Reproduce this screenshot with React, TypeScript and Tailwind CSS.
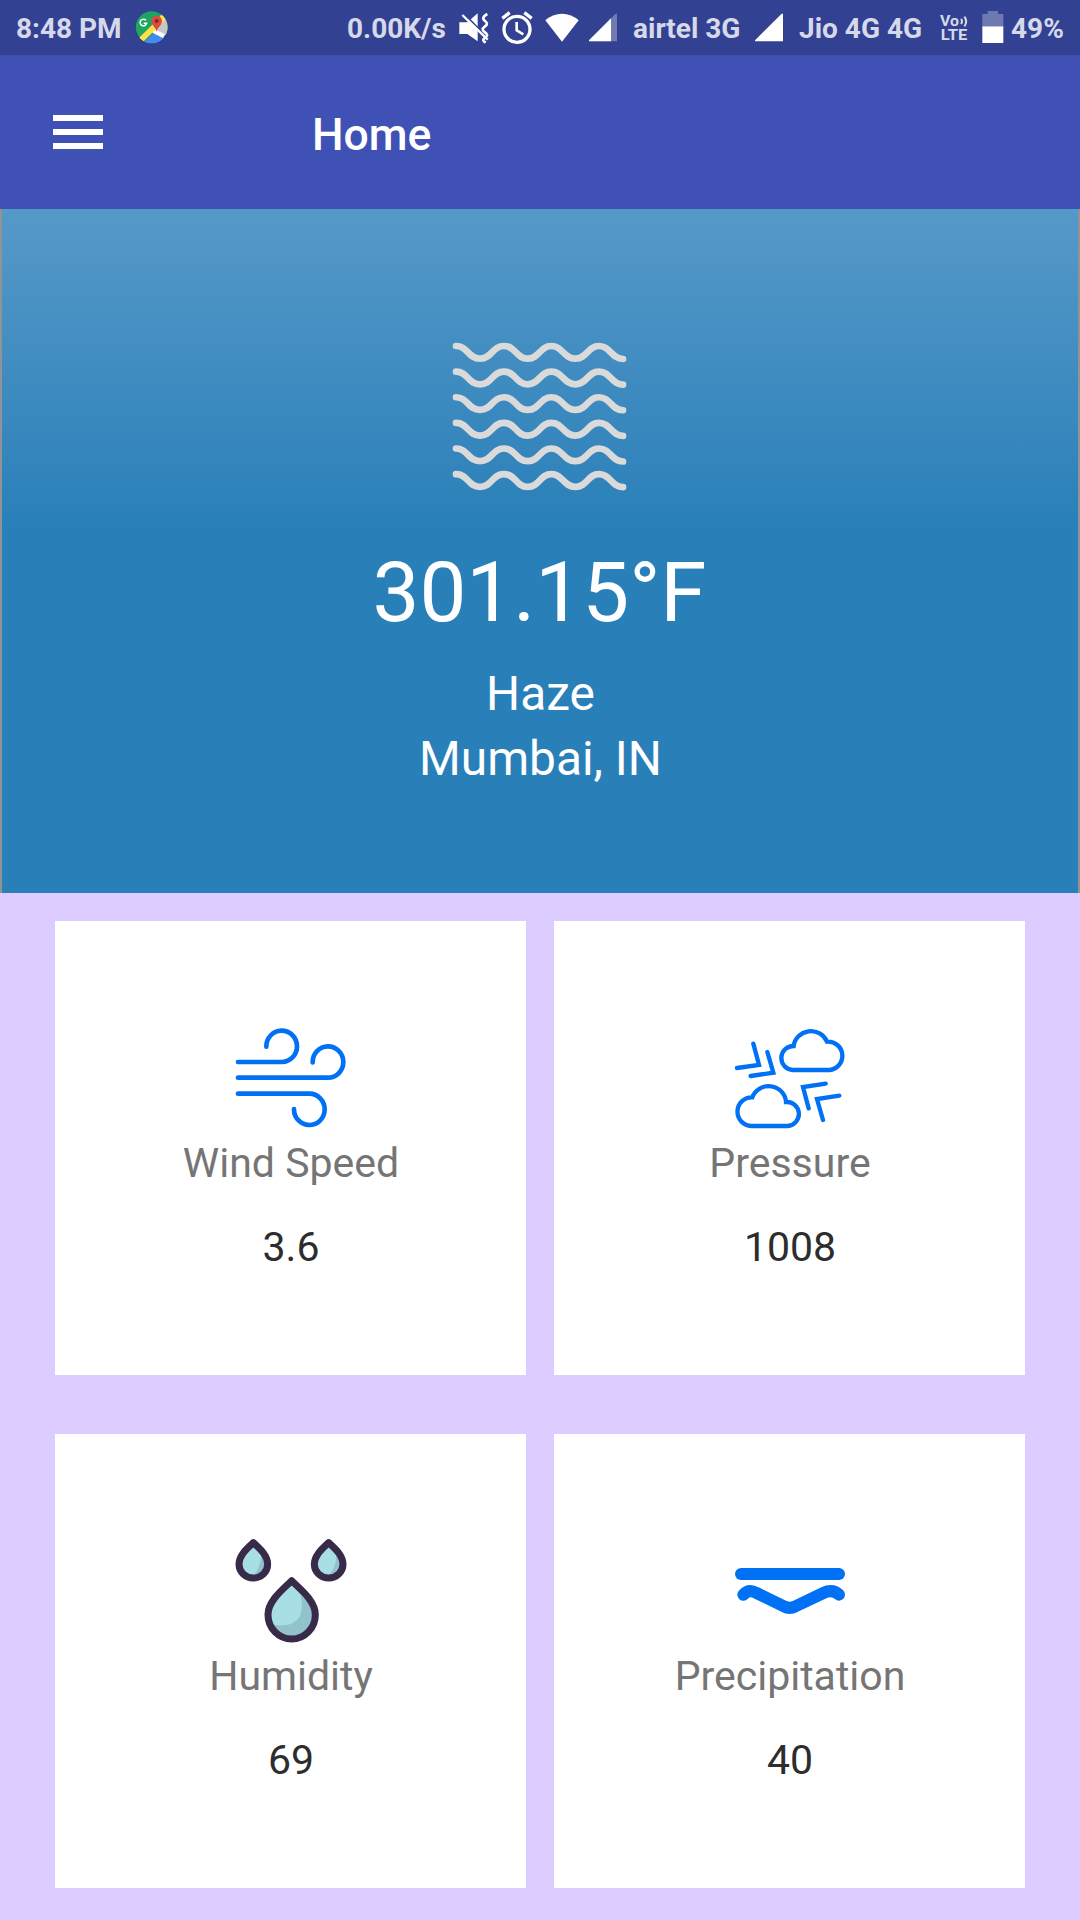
import type { ReactNode } from "react";

function MapsIcon() {
  return (
    <svg className="block h-[55px] w-[34px]" viewBox="0 0 102 165">
      <defs>
        <clipPath id="disc"><circle cx="50" cy="82" r="48" /></clipPath>
      </defs>
      <circle cx="50" cy="84" r="49" fill="#273377" />
      <g clipPath="url(#disc)">
        <rect y="30" width="102" height="105" fill="#1fa463" />
        <path d="M88 30L102 30V110L60 92L54 78Z" fill="#c7c7c7" />
        <path d="M20 132L62 96L102 116V135H20Z" fill="#4688f4" />
        <path d="M56 86L90 103L84 114L52 98Z" fill="#fff" />
        <path d="M8 118L82 44L94 56L20 130Z" fill="#ffe047" />
      </g>
      <path d="M65 97C64 82 49 77 49 63A16 16 0 0 1 81 63C81 77 66 82 65 97Z" fill="#dd4b3e" />
      <circle cx="65" cy="63" r="6" fill="#7b2a22" />
      <path d="M33 61A10 10 0 1 0 35 70H26" fill="none" stroke="#fff" strokeWidth="4.5" />
    </svg>
  );
}

function MuteVibrateIcon() {
  return (
    <svg className="block h-[55px] w-[30px]" viewBox="0 0 90 165">
      <path d="M1 67H25L56 40V124L25 102H1Z" fill="#fff" />
      <path d="M12 38L92 121" stroke="#334192" strokeWidth="6" />
      <path d="M10 45L86 119" stroke="#fff" strokeWidth="7" />
      <path d="M85 42C70 50 70 57 78 63C86 69 86 74 77 80C68 87 70 91 78 97C88 104 86 109 77 114C70 119 72 123 80 128" fill="none" stroke="#fff" strokeWidth="8" />
    </svg>
  );
}

function AlarmIcon() {
  return (
    <svg className="block h-[55px] w-[32px]" viewBox="0 0 96 165">
      <circle cx="48" cy="88" r="39" fill="none" stroke="#fff" strokeWidth="10" />
      <path d="M4 55L26 38M92 55L70 38" stroke="#fff" strokeWidth="10" />
      <path d="M47 66V91L67 103" fill="none" stroke="#fff" strokeWidth="8" />
    </svg>
  );
}

function WifiIcon() {
  return (
    <svg className="block h-[55px] w-[34px]" viewBox="0 0 102 165">
      <path d="M51 125L1 61Q23 41 51 41T101 61Z" fill="#fff" />
    </svg>
  );
}

function SignalIcon({ weak = false }: { weak?: boolean }) {
  return (
    <svg className="block h-[55px] w-[28px]" viewBox="0 0 84 165">
      <path d="M0 124V121L80 41H84V124Z" fill="#fff" opacity={weak ? 0.3 : 1} />
      {weak && <path d="M0 124V121L66 55V124Z" fill="#fff" />}
    </svg>
  );
}

function VolteIcon() {
  return (
    <svg className="block h-[55px] w-[28px]" viewBox="0 0 84 165">
      <g fill="#d6d9e9" fontFamily="Roboto, sans-serif" fontWeight="700">
        <text x="0" y="79" fontSize="42" textLength="57" lengthAdjust="spacingAndGlyphs">Vo</text>
        <text x="2" y="121" fontSize="45" textLength="80" lengthAdjust="spacingAndGlyphs">LTE</text>
      </g>
      <path d="M63 57Q69 64 63 72M73 50Q84 64 73 79" fill="none" stroke="#d6d9e9" strokeWidth="6" />
    </svg>
  );
}

function BatteryIcon() {
  return (
    <svg className="block h-[55px] w-[22px]" viewBox="0 0 66 165">
      <path d="M1 42H17V33H48V42H64V79H1Z" fill="#6f79b1" />
      <path d="M1 79H64V129H1Z" fill="#fff" />
    </svg>
  );
}

function StatusText({ className, children }: { className: string; children: ReactNode }) {
  return <span className={`block whitespace-nowrap text-[28px] leading-[57px] font-bold text-[#d6d9e9] ${className}`}>{children}</span>;
}

function HazeIcon() {
  return (
    <svg className="block h-[190px] w-[220px]" viewBox="0 0 660 570" fill="none" stroke="#dadada" strokeWidth="20" strokeLinecap="round">
      {[0, 1, 2, 3, 4, 5].map((row) => (
        <path
          key={row}
          transform={`translate(0 ${row * 76.9})`}
          d="M78 78C114 78 114 116 150 116S186 78 222 78S257 116 293 116S329 78 364 78S400 116 436 116S472 78 507 78S543 116 579 117"
        />
      ))}
    </svg>
  );
}

function WindIcon() {
  return (
    <svg className="block h-[128px] w-[141px]" viewBox="0 0 423 384" fill="none" stroke="#0070f5" strokeWidth="14" strokeLinecap="round">
      <path d="M54 156H186A46 47 0 1 0 139 110" />
      <path d="M54 203H324A46 47 0 1 0 278 157" />
      <path d="M54 251H268A46 47 0 1 1 222 297" />
    </svg>
  );
}

function PressureIcon() {
  return (
    <svg className="block h-[128px] w-[141px]" viewBox="-3 0 423 384" fill="none" stroke="#0070f5" strokeWidth="13" strokeLinecap="round">
      <path d="M219 180A36 36 0 0 1 221 108A52 50 0 0 1 321 95A42 42 0 0 1 328 180Z" />
      <path d="M94 348A43 43 0 0 1 97 262A52 50 0 0 1 198 276A36 36 0 0 1 203 348Z" />
      <path d="M100 101L117 165L51 174M142 126L160 188L92 198M317 221L249 231L266 295M358 257L291 267L309 330" />
    </svg>
  );
}

function HumidityIcon() {
  return (
    <svg className="block h-[128px] w-[141px] overflow-visible" viewBox="0 9 423 384">
      {[100, 326].map((x) => (
        <g key={x} transform={`translate(${x} 0)`}>
          <path d="M0 68C18 85 43 105 43 133A43 41 0 0 1 -43 133C-43 105 -18 85 0 68Z" fill="#a8dfe6" />
          <path d="M24 103Q37 120 35 137Q29 164 4 162Q21 145 24 103Z" fill="#92c2cc" />
          <path d="M0 68C18 85 43 105 43 133A43 41 0 0 1 -43 133C-43 105 -18 85 0 68Z" fill="none" stroke="#382b49" strokeWidth="21" strokeLinejoin="round" />
        </g>
      ))}
      <path d="M215 182C240 207 286 242 286 284A71 73 0 0 1 144 284C144 242 190 207 215 182Z" fill="#a8dfe6" />
      <path d="M242 225Q280 260 279 291Q269 345 215 349Q177 346 161 315Q264 327 242 225Z" fill="#92c2cc" />
      <path d="M215 182C240 207 286 242 286 284A71 73 0 0 1 144 284C144 242 190 207 215 182Z" fill="none" stroke="#382b49" strokeWidth="21" strokeLinejoin="round" />
    </svg>
  );
}

function PrecipitationIcon() {
  return (
    <svg className="block h-[128px] w-[141px]" viewBox="-3 -81 423 384" fill="none" stroke="#0070f5" strokeWidth="36" strokeLinecap="round" strokeLinejoin="round">
      <path d="M63 72H357" />
      <path d="M70 134Q86 116 110 129L192 169Q209 178 226 169L310 129Q338 116 357 134" />
    </svg>
  );
}

function Card({ icon, label, value }: { icon: ReactNode; label: string; value: string }) {
  return (
    <section className="flex h-[454px] flex-col items-center bg-white pt-[89px] text-[41px] leading-[50px]">
      {icon}
      <h2 className="pl-px text-[#757575]">{label}</h2>
      <p className="mt-[34px] pl-px text-[#2d2d2d]">{value}</p>
    </section>
  );
}

export default function App() {
  return (
    <div className="h-[1920px] w-[1080px] overflow-hidden bg-[#ddccff] font-['Roboto',sans-serif]">
      <div className="flex h-[55px] items-start bg-[#334192] pl-[16px]">
        <StatusText className="w-[119px]">8:48 PM</StatusText>
        <MapsIcon />
        <StatusText className="ml-[178px] w-[112px]">0.00K/s</StatusText>
        <MuteVibrateIcon />
        <div className="ml-[12px]"><AlarmIcon /></div>
        <div className="ml-[12px]"><WifiIcon /></div>
        <div className="ml-[10px]"><SignalIcon weak /></div>
        <StatusText className="ml-[16px] w-[122px]">airtel 3G</StatusText>
        <SignalIcon />
        <StatusText className="ml-[16px] w-[141px]">Jio 4G 4G</StatusText>
        <VolteIcon />
        <div className="ml-[14px]"><BatteryIcon /></div>
        <StatusText className="ml-[7px]">49%</StatusText>
      </div>

      <header className="flex h-[154px] items-start bg-[#3f51b5] pl-[53px]">
        <div className="mt-[60px] flex w-[50px] flex-col gap-[8px]">
          <span className="h-[6px] bg-white" />
          <span className="h-[6px] bg-white" />
          <span className="h-[6px] bg-white" />
        </div>
        <h1 className="mt-[54px] ml-[209px] text-[44.5px] leading-[53px] font-medium text-white">Home</h1>
      </header>

      <main>
        <section className="flex h-[684px] flex-col items-center border-x-2 border-[#8f9497] bg-linear-to-b from-[#5599c8] to-[#2980b9] to-[46%] pt-[111px] text-white">
          <HazeIcon />
          <p className="mt-[34px] pr-px text-[83.5px] leading-[98px]">301.15°F</p>
          <p className="mt-[20px] pl-px text-[47.8px] leading-[65px]">Haze</p>
          <p className="pl-px text-[47.8px] leading-[65px]">Mumbai, IN</p>
        </section>
        <div className="grid grid-cols-[471px_471px] justify-center gap-x-[28px] gap-y-[59px] pt-[28px]">
          <Card icon={<WindIcon />} label="Wind Speed" value="3.6" />
          <Card icon={<PressureIcon />} label="Pressure" value="1008" />
          <Card icon={<HumidityIcon />} label="Humidity" value="69" />
          <Card icon={<PrecipitationIcon />} label="Precipitation" value="40" />
        </div>
      </main>
    </div>
  );
}
